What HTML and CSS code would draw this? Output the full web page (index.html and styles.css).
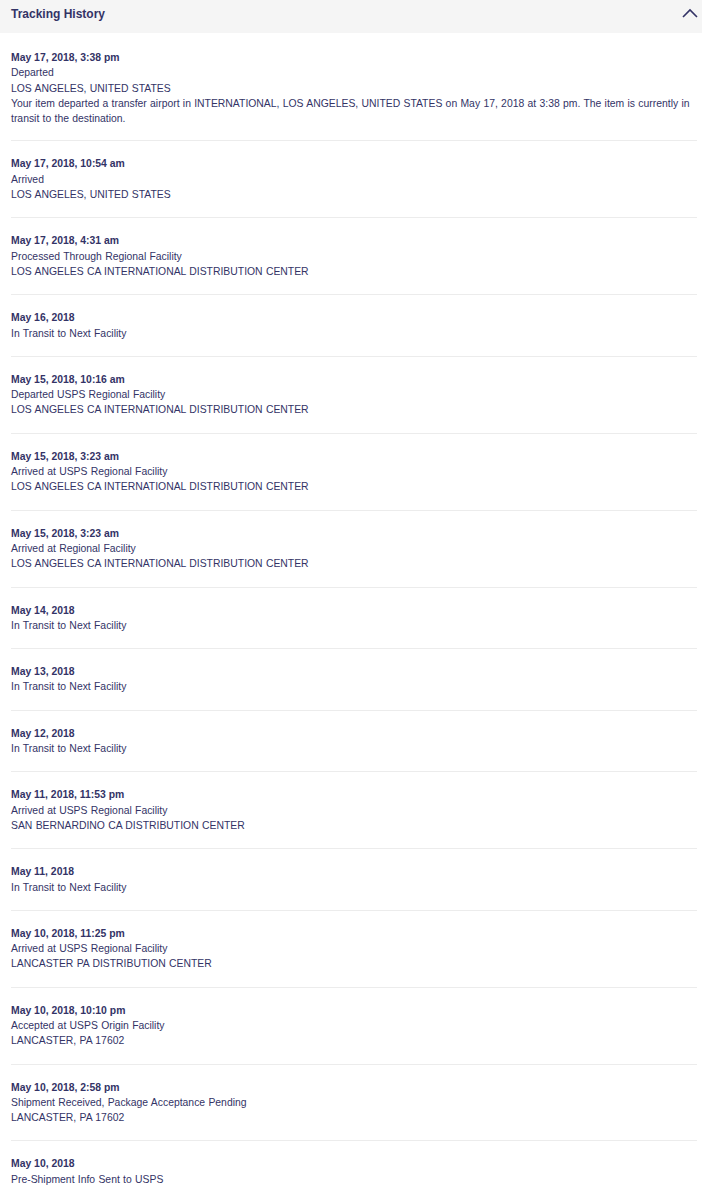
FILE: index.html
```html
<!DOCTYPE html>
<html>
<head>
<meta charset="utf-8">
<link rel="stylesheet" href="styles.css">
</head>
<body>
<div class="panel">
  <div class="panel-head">
    <span class="title">Tracking History</span>
    <svg class="chev" width="16" height="10" viewBox="0 0 16 10"><path d="M1 9 L8 2 L15 9" fill="none" stroke="#333366" stroke-width="1.6"/></svg>
  </div>
  <div class="list">
    <div class="entry"><div class="date">May 17, 2018, 3:38 pm</div><div>Departed</div><div>LOS ANGELES, UNITED STATES</div><div>Your item departed a transfer airport in INTERNATIONAL, LOS ANGELES, UNITED STATES on May 17, 2018 at 3:38 pm. The item is currently in transit to the destination.</div></div>
    <div class="entry"><div class="date">May 17, 2018, 10:54 am</div><div>Arrived</div><div>LOS ANGELES, UNITED STATES</div></div>
    <div class="entry"><div class="date">May 17, 2018, 4:31 am</div><div>Processed Through Regional Facility</div><div>LOS ANGELES CA INTERNATIONAL DISTRIBUTION CENTER</div></div>
    <div class="entry"><div class="date">May 16, 2018</div><div>In Transit to Next Facility</div></div>
    <div class="entry"><div class="date">May 15, 2018, 10:16 am</div><div>Departed USPS Regional Facility</div><div>LOS ANGELES CA INTERNATIONAL DISTRIBUTION CENTER</div></div>
    <div class="entry"><div class="date">May 15, 2018, 3:23 am</div><div>Arrived at USPS Regional Facility</div><div>LOS ANGELES CA INTERNATIONAL DISTRIBUTION CENTER</div></div>
    <div class="entry"><div class="date">May 15, 2018, 3:23 am</div><div>Arrived at Regional Facility</div><div>LOS ANGELES CA INTERNATIONAL DISTRIBUTION CENTER</div></div>
    <div class="entry"><div class="date">May 14, 2018</div><div>In Transit to Next Facility</div></div>
    <div class="entry"><div class="date">May 13, 2018</div><div>In Transit to Next Facility</div></div>
    <div class="entry"><div class="date">May 12, 2018</div><div>In Transit to Next Facility</div></div>
    <div class="entry"><div class="date">May 11, 2018, 11:53 pm</div><div>Arrived at USPS Regional Facility</div><div>SAN BERNARDINO CA DISTRIBUTION CENTER</div></div>
    <div class="entry"><div class="date">May 11, 2018</div><div>In Transit to Next Facility</div></div>
    <div class="entry"><div class="date">May 10, 2018, 11:25 pm</div><div>Arrived at USPS Regional Facility</div><div>LANCASTER PA DISTRIBUTION CENTER</div></div>
    <div class="entry"><div class="date">May 10, 2018, 10:10 pm</div><div>Accepted at USPS Origin Facility</div><div>LANCASTER, PA 17602</div></div>
    <div class="entry"><div class="date">May 10, 2018, 2:58 pm</div><div>Shipment Received, Package Acceptance Pending</div><div>LANCASTER, PA 17602</div></div>
    <div class="entry"><div class="date">May 10, 2018</div><div>Pre-Shipment Info Sent to USPS</div></div>
  </div>
</div>
</body>
</html>
```
FILE: styles.css
```css
html, body {
  margin: 0;
  padding: 0;
  background: #ffffff;
}
body {
  font-family: "Liberation Sans", Arial, sans-serif;
  color: #333366;
  font-size: 10.4px;
  word-spacing: 0.4px;
}
.panel-head {
  height: 33px;
  background: #f5f5f5;
  display: flex;
  align-items: center;
  justify-content: space-between;
  padding: 0 4px 0 11px;
  box-sizing: border-box;
}
.title {
  font-weight: bold;
  font-size: 12px;
  word-spacing: 0;
  margin-top: -6px;
}
.chev {
  display: block;
  margin-top: -7px;
}
.list {
  padding: 2px 5px 0 11px;
}
.entry {
  padding: 15px 0;
  line-height: 15.3px;
  border-bottom: 1px solid #ececec;
}
.entry:first-child {
  padding-bottom: 14px;
}
.entry:last-child {
  border-bottom: none;
}
.date {
  font-weight: bold;
  word-spacing: 0;
}
```
